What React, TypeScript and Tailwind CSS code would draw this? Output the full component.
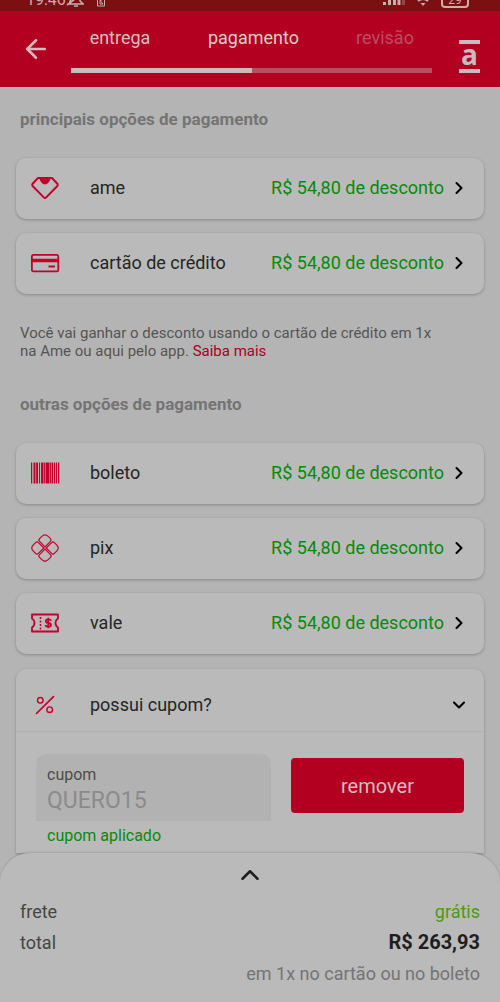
import { FC, ReactNode, useState } from 'react';
import { ArrowLeft, ChevronDown, ChevronRight, ChevronUp } from 'lucide-react';

const AmeIcon: FC = () => (
    <svg viewBox="0 0 30 24" className="h-6 w-[30px]" fill="none" stroke="currentColor" strokeWidth="2" strokeLinejoin="round">
        <path d="M8 2H22L27.6 8Q28 9 27.4 10L16.2 21.4Q15 22.6 13.8 21.4L2.6 10Q2 9 2.4 8Z" />
        <path d="M9 2H21Q18.500 8.500 15 8.500Q11.500 8.500 9 2Z" fill="currentColor" stroke="none" />
    </svg>
);

const CardIcon: FC = () => (
    <svg viewBox="0 0 30 24" className="h-6 w-[30px]" fill="none" stroke="currentColor" strokeWidth="1.8">
        <rect x="1.9" y="3.9" width="26.400" height="16.500" rx="1.5" />
        <path d="M2 9.500H28" strokeWidth="3.500" />
        <path d="M18.500 15.500H25" strokeWidth="2" />
    </svg>
);

const BarcodeIcon: FC = () => (
    <svg viewBox="0 0 30 24" className="h-6 w-[30px]" fill="currentColor">
        <path d="M1 1.500h1.200v21h-1.200zM3.500 1.500h2v21h-2zM6.200 1.500h1.800v21h-1.800zM9 1.500h1v21h-1zM11 1.500h2.200v21h-2.200zM13.700 1.500h1.200v21h-1.200zM15.500 1.500h3.700v21h-3.700zM19.700 1.500h1.200v21h-1.200zM21.500 1.500h1.700v21h-1.700zM24 1.500h1.200v21h-1.200zM26 1.500h1v21h-1zM28 1.500h1.300v21h-1.300z" />
    </svg>
);

const PixIcon: FC = () => (
    <svg viewBox="0 0 30 30" className="size-[30px]" fill="none" stroke="currentColor" strokeWidth="1.2">
        <g transform="rotate(45 15 15)">
            <path d="M4.500 9Q4.500 4.500 9 4.500H12.200Q14.200 4.500 14.200 6.500V14.200H6.500Q4.500 14.200 4.500 12.200Z" />
            <path d="M25.500 9Q25.500 4.500 21 4.500H17.800Q15.800 4.500 15.800 6.500V14.200H23.500Q25.500 14.200 25.500 12.200Z" />
            <path d="M4.500 21Q4.500 25.500 9 25.500H12.200Q14.200 25.500 14.200 23.500V15.800H6.500Q4.500 15.800 4.500 17.800Z" />
            <path d="M25.500 21Q25.500 25.500 21 25.500H17.800Q15.800 25.500 15.800 23.500V15.800H23.500Q25.500 15.800 25.500 17.800Z" />
        </g>
    </svg>
);

const VoucherIcon: FC = () => (
    <svg viewBox="0 0 30 24" className="h-6 w-[30px]" fill="none" stroke="currentColor" strokeWidth="1.8" strokeLinejoin="round">
        <path d="M2 3.500H28V7.500Q25.500 9 25.500 12Q25.500 15 28 16.500V20.500H2V16.500Q4.500 15 4.500 12Q4.500 9 2 7.500Z" />
        <path d="M10.500 6V18.500" strokeWidth="1.500" strokeDasharray="2 1.500" />
        <path d="M21.300 9.600Q20.600 8.400 18.300 8.400Q15.800 8.400 15.800 10.200Q15.800 11.700 18.300 12Q21 12.400 21 14Q21 15.700 18.400 15.700Q16 15.700 15.200 14.300M18.300 6.800V17.300" />
    </svg>
);

const PercentIcon: FC = () => (
    <svg viewBox="0 0 20 20" className="size-5" fill="none" stroke="currentColor" strokeWidth="1.400" strokeLinecap="round">
        <path d="M1.500 18.500L18.500 1.700" strokeWidth="1.700" />
        <circle cx="5.300" cy="5.300" r="2.800" />
        <circle cx="14.700" cy="14.700" r="2.800" />
    </svg>
);

const StatusBar: FC = () => (
    <div className="flex h-[11px] items-end justify-between overflow-hidden bg-[#7b0f12] pr-[31px] pb-px pl-[26px] text-[#c5afaf]">
        <div className="flex h-5 items-center">
            <span className="text-base leading-5">19:46</span>
            <svg viewBox="0 0 18 20" className="h-5 w-[18px]" fill="none" stroke="currentColor" strokeWidth="1.600">
                <path d="M3 14H17L14 11V7Q13 3 9 3Q5 4 5 9L3 14M8 16H12M1 15L17 3" />
            </svg>
            <svg viewBox="0 0 10 20" className="ml-3 h-5 w-[10px]" fill="none" stroke="currentColor" strokeWidth="1">
                <path d="M1.500 5H8.500V16H1.500ZM3 9L7 14M7 9L4 11V14H7" />
            </svg>
        </div>
        <div className="flex h-5 items-center gap-[11px]">
            <svg viewBox="0 0 22 20" className="h-5 w-[22px]" fill="currentColor">
                <path d="M0 12h3v3h-3zM5 9h3v6h-3zM10 6h3v9h-3zM14.500 3h3v12h-3z" />
                <path d="M19 1h3v14h-3z" opacity=".35" />
            </svg>
            <svg viewBox="0 0 14 20" className="h-5 w-[14px]" fill="none" stroke="currentColor" strokeWidth="2">
                <path d="M0 7Q7 1 14 7M2 11Q7 7 12 11" />
                <path d="M4.500 13L7 16L9.500 13Z" fill="currentColor" stroke="none" />
            </svg>
            <span className="flex h-4 w-7 items-center justify-center rounded border-2 border-[#c5afaf] text-xs leading-3">29</span>
        </div>
    </div>
);

const Header: FC = () => (
    <header className="flex h-[76px] bg-[#b30021] text-[#d4bcc1]">
        <button type="button" aria-label="voltar" className="flex w-[71px] items-center justify-center">
            <ArrowLeft className="size-[30px]" strokeWidth={2} />
        </button>
        <div className="flex flex-1 flex-col justify-between pt-[15px] pb-[14px]">
            <ol className="grid grid-cols-[98px_1fr_94px] text-center text-lg leading-6">
                <li>entrega</li>
                <li className="text-[#dccacd]">pagamento</li>
                <li className="text-[#c04c61]">revisão</li>
            </ol>
            <div className="h-[5px] bg-[#b94e60]">
                <div className="h-full w-1/2 bg-[#c7bcbe]" />
            </div>
        </div>
        <div className="flex w-[68px] items-center justify-end pt-[14px] pr-5">
            <div className="flex h-[33px] w-[21px] items-center justify-center border-y-4 border-[#c7bcbe] font-['Open_Sans'] text-[28px] leading-5 font-bold text-[#c7bcbe]">
                <span className="pb-1">a</span>
            </div>
        </div>
    </header>
);

const PaymentOption: FC<{ icon: ReactNode; name: string }> = ({ icon, name }) => (
    <button
        type="button"
        className="flex h-[61px] w-full items-center rounded-[10px] bg-[#bababa] pr-[15px] pb-px pl-[14px] text-lg shadow-[0_1px_3px_#00000040]"
    >
        <span className="flex w-[60px] shrink-0 text-[#c2002b]">{icon}</span>
        <span className="flex-1 text-left text-[#252525]">{name}</span>
        <span className="text-[#078a0b]">R$ 54,80 de desconto</span>
        <ChevronRight className="ml-[5px] size-5 text-black" strokeWidth={2.5} />
    </button>
);

const mainOptions = [
    { name: 'ame', icon: <AmeIcon /> },
    { name: 'cartão de crédito', icon: <CardIcon /> },
];

const otherOptions = [
    { name: 'boleto', icon: <BarcodeIcon /> },
    { name: 'pix', icon: <PixIcon /> },
    { name: 'vale', icon: <VoucherIcon /> },
];

const App: FC = () => {
    const [coupon, setCoupon] = useState('QUERO15');

    return (
        <div className="flex min-h-screen flex-col bg-[#b4b4b4] font-[Roboto,sans-serif]">
            <StatusBar />
            <Header />

            {/* Payment options */}
            <main className="flex-1 px-4 pt-5">
                <h2 className="px-1 text-[17px] leading-6 font-bold text-[#747474]">principais opções de pagamento</h2>
                <div className="mt-[27px] flex flex-col gap-[14px]">
                    {mainOptions.map((option) => (
                        <PaymentOption key={option.name} {...option} />
                    ))}
                </div>
                <p className="mt-[30px] px-1 text-[15px] leading-[18px] text-[#545454]">
                    Você vai ganhar o desconto usando o cartão de crédito em 1x
                    <br />
                    na Ame ou aqui pelo app.{' '}
                    <a href="#" className="text-[#ac0020]">Saiba mais</a>
                </p>

                <h2 className="mt-8 px-1 text-[17px] leading-6 font-bold text-[#747474]">outras opções de pagamento</h2>
                <div className="mt-[27px] flex flex-col gap-[14px]">
                    {otherOptions.map((option) => (
                        <PaymentOption key={option.name} {...option} />
                    ))}
                </div>

                {/* Coupon */}
                <section className="mt-[15px] rounded-t-[10px] bg-[#bababa] shadow-[0_1px_3px_#00000040]">
                    <button type="button" className="flex h-[63px] w-full items-center border-b border-[#b1b1b1] pt-[10px] pr-[15px] pl-[19px] text-lg text-[#252525]">
                        <span className="w-[55px] text-[#c2002b]"><PercentIcon /></span>
                        <span className="flex-1 text-left">possui cupom?</span>
                        <ChevronDown className="size-5 text-black" strokeWidth={2.5} />
                    </button>
                    <div className="flex gap-5 px-5 pt-[22px] pb-[7px]">
                        <div className="flex-1">
                            <div className="h-[67px] rounded-t-[10px] bg-[#b2b2b2] px-[11px] pt-[11px]">
                                <label htmlFor="coupon" className="block text-base leading-5 text-[#4c4c4c]">cupom</label>
                                <input
                                    id="coupon"
                                    value={coupon}
                                    onChange={(e) => setCoupon(e.target.value)}
                                    className="block w-full text-[23px] leading-8 text-[#8b8b8b] outline-none"
                                />
                            </div>
                            <p className="px-[11px] pt-[5px] text-base leading-5 text-[#078a0b]">cupom aplicado</p>
                        </div>
                        <button type="button" className="mt-1 h-[55px] w-[173px] rounded-sm bg-[#b30021] text-xl text-[#d4bcc1]">
                            remover
                        </button>
                    </div>
                </section>
            </main>

            {/* Order summary */}
            <footer className="rounded-t-[30px] border-b-[3px] border-black bg-[#bababa] px-5 pt-[7px] pb-[15px] text-lg shadow-[0_-1px_2px_#00000020]">
                <button type="button" aria-label="ver resumo" className="mx-auto block">
                    <ChevronUp className="size-[30px] text-[#1e1e1e]" />
                </button>
                <div className="mt-[6px] flex justify-between leading-[31px] text-[#454545]">
                    <span>frete</span>
                    <span className="text-[#4c9b12]">grátis</span>
                </div>
                <div className="flex justify-between leading-[31px] text-[#454545]">
                    <span>total</span>
                    <span className="text-xl leading-[31px] font-bold text-[#1e1e1e]">R$ 263,93</span>
                </div>
                <p className="text-right leading-[31px] text-[#747474]">em 1x no cartão ou no boleto</p>
            </footer>
        </div>
    );
};

export default App;
